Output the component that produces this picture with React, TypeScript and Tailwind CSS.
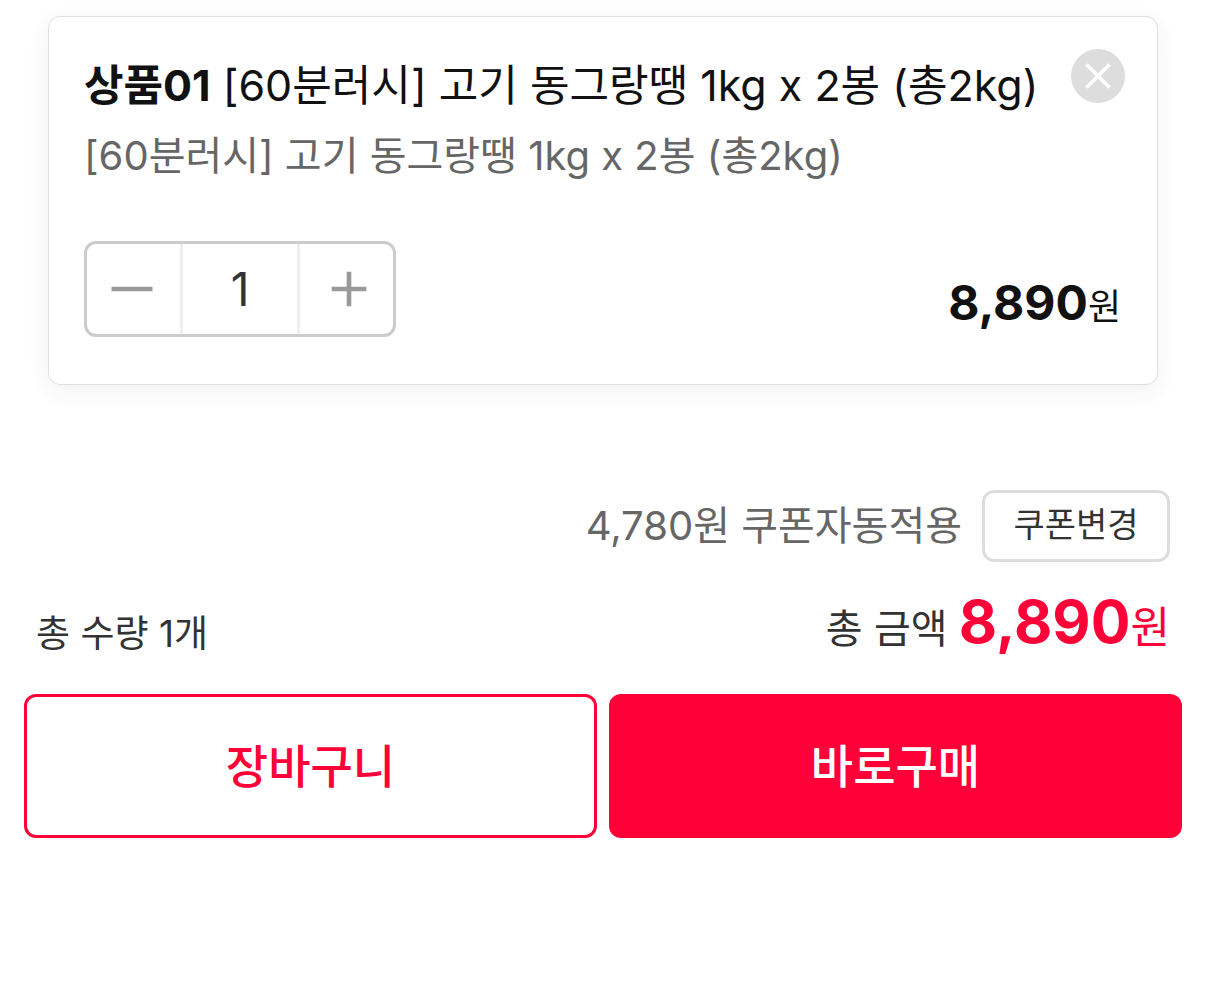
import React, { useState } from 'react';

interface Product {
    label: string;
    name: string;
    price: number;
}

const product: Product = {
    label: '상품01',
    name: '[60분러시] 고기 동그랑땡 1kg x 2봉 (총2kg)',
    price: 8890,
};

const COUPON_DISCOUNT = 4780;

const MinusIcon = () => (
    <svg width="42" height="42" viewBox="0 0 42 42" fill="none" stroke="#999999" strokeWidth="4.6" aria-hidden="true">
        <path d="M0.5 21h41" />
    </svg>
);

const PlusIcon = () => (
    <svg width="36" height="36" viewBox="0 0 36 36" fill="none" stroke="#999999" strokeWidth="4.6" aria-hidden="true">
        <path d="M0.7 18h34.6M18 0.7v34.6" />
    </svg>
);

const CloseIcon = () => (
    <svg width="54" height="54" viewBox="0 0 54 54" fill="none" stroke="#ffffff" strokeWidth="3.6" aria-hidden="true">
        <path d="M15.5 15.5l23 23M38.5 15.5l-23 23" />
    </svg>
);

const App: React.FC = () => {
    const [quantity, setQuantity] = useState(1);
    const [visible, setVisible] = useState(true);

    const count = visible ? quantity : 0;
    const total = (product.price * count).toLocaleString('en-US');

    return (
        <main className="bg-white px-6 pt-4 font-['Inter','Noto_Sans_CJK_KR',sans-serif] text-[#111111]">
            {visible && (
                <section className="mx-6 rounded-xl border border-[#dfdfe0] pt-8 pr-9 pb-[47px] pl-[35px] shadow-[0_6px_24px_rgba(0,0,0,0.06)]">
                    <div className="flex items-start justify-between">
                        <div>
                            <h2 className="text-[43px] leading-[72px] whitespace-nowrap">
                                <strong className="font-bold">{product.label}</strong> {product.name}
                            </h2>
                            <p className="text-[40px] leading-[70px] whitespace-nowrap text-[#666666]">{product.name}</p>
                        </div>
                        <button
                            type="button"
                            aria-label="삭제"
                            onClick={() => setVisible(false)}
                            className="-mr-1 shrink-0 rounded-full bg-[#dddddd]"
                        >
                            <CloseIcon />
                        </button>
                    </div>

                    <div className="mt-[50px] flex items-end justify-between">
                        <div className="flex h-24 w-78 rounded-xl border-3 border-[#cccccc]">
                            <button
                                type="button"
                                aria-label="수량 감소"
                                onClick={() => setQuantity(Math.max(1, quantity - 1))}
                                className="flex w-[93px] items-center justify-center pr-1"
                            >
                                <MinusIcon />
                            </button>
                            <input
                                type="text"
                                inputMode="numeric"
                                aria-label="수량"
                                value={quantity}
                                onChange={(e) => setQuantity(Math.max(1, Number(e.target.value) || 1))}
                                className="w-30 border-x-3 border-[#eeeeee] text-center text-[46px] text-[#333333] outline-none"
                            />
                            <button
                                type="button"
                                aria-label="수량 증가"
                                onClick={() => setQuantity(quantity + 1)}
                                className="flex w-[93px] items-center justify-center pl-1"
                            >
                                <PlusIcon />
                            </button>
                        </div>
                        <p className="text-[36px] leading-[60px]">
                            <strong className="text-[48px] font-bold">{total}</strong>원
                        </p>
                    </div>
                </section>
            )}

            <div className="mt-[105px] flex items-center justify-end gap-5 pr-3">
                <span className="text-[40px] leading-[72px] text-[#666666]">
                    {COUPON_DISCOUNT.toLocaleString('en-US')}원 쿠폰자동적용
                </span>
                <button type="button" className="h-18 w-47 rounded-xl border-3 border-[#dddddd] pb-1 text-[34px] text-[#333333]">
                    쿠폰변경
                </button>
            </div>

            <div className="mt-5 flex h-21 items-end justify-between px-3 text-[#333333]">
                <p className="text-[37px] leading-[64px]">총 수량 {count}개</p>
                <p className="text-[40px] leading-[74px]">
                    총 금액 <strong className="text-[59px] font-bold text-[#ff0038]">{total}</strong>
                    <span className="text-[43px] text-[#ff0038]">원</span>
                </p>
            </div>

            <div className="mt-7 grid grid-cols-2 gap-3">
                <button type="button" className="h-36 rounded-xl border-3 border-[#ff0038] text-[46px] font-medium text-[#ff0038]">
                    장바구니
                </button>
                <button type="button" className="h-36 rounded-xl bg-[#ff0038] text-[46px] font-medium text-white">
                    바로구매
                </button>
            </div>
        </main>
    );
};

export default App;
